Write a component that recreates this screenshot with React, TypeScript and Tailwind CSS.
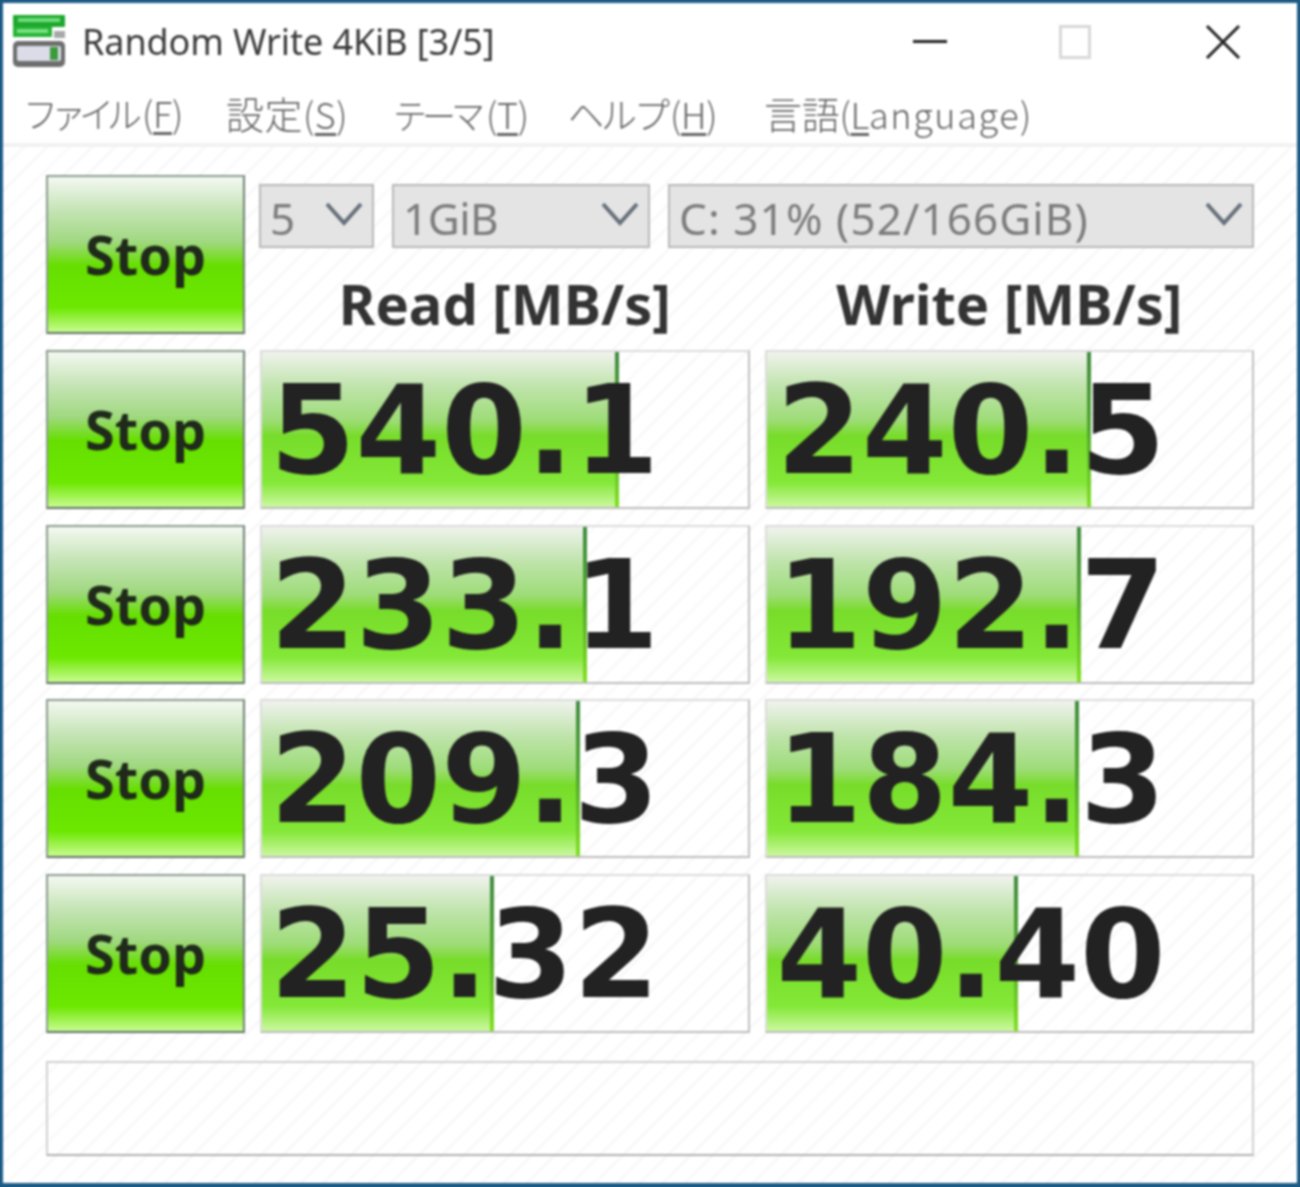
import React from "react";

const rows = [
  { read: "540.1", readPct: 73.5, write: "240.5", writePct: 66.8 },
  { read: "233.1", readPct: 67, write: "192.7", writePct: 64.8 },
  { read: "209.3", readPct: 65.5, write: "184.3", writePct: 64.4 },
  { read: "25.32", readPct: 47.8, write: "40.40", writePct: 51.8 },
];

const menus = [
  { label: "ファイル", labelCls: "text-[35px] tracking-[-7px] mr-[7px]", key: "F", after: ")", cls: "w-[203px]", afterCls: "" },
  { label: "設定", labelCls: "text-[38px]", key: "S", after: ")", cls: "w-[167px] tracking-[0.5px]", afterCls: "" },
  { label: "テーマ", labelCls: "text-[34px] tracking-[-5px] mr-[6px]", key: "T", after: ")", cls: "w-[175px]", afterCls: "" },
  { label: "ヘルプ", labelCls: "text-[36px] tracking-[-3px] mr-[3px]", key: "H", after: ")", cls: "w-[196px]", afterCls: "" },
  { label: "言語", labelCls: "text-[38px]", key: "L", after: "anguage)", cls: "", afterCls: "tracking-[1.6px]" },
];

function StopButton() {
  return (
    <button className="w-[199px] h-[159px] shrink-0 flex items-center justify-center border-2 border-[#8a9c8e] border-r-[#6f8274] border-b-[#5f7264] bg-[linear-gradient(to_bottom,#f4f8f2_0%,#c4e4b4_22%,#a0d880_42%,#66df00_57%,#6ce800_84%,#c8fb90_100%)] font-['Noto_Sans'] font-bold text-[54px] text-[#1f2a1a]">
      Stop
    </button>
  );
}

function Meter({ value, pct, textCls }: { value: string; pct: number; textCls: string }) {
  return (
    <div className="relative h-[159px] flex-1 border-2 border-[#dcdcdc] border-b-[#bcbcbc] border-r-[#c0c0c0] overflow-hidden">
      <div
        className="absolute left-0 top-0 bottom-0 bg-[linear-gradient(to_bottom,#f0f3ee_0%,#c0e4ac_22%,#9edc78_44%,#78dc2a_54%,#84e838_84%,#ccf8a0_100%)]"
        style={{ width: `${pct}%` }}
      >
        <div className="absolute right-0 top-0 bottom-0 w-[4px] bg-[linear-gradient(to_bottom,#3f8a3f_0%,#52a830_50%,#80e020_100%)]" />
      </div>
      <span className={`absolute top-[11px] font-['DejaVu_Sans'] font-bold text-[123px] leading-[136px] text-[#222222] ${textCls}`}>
        {value}
      </span>
    </div>
  );
}

function Select({ text, cls, textCls }: { text: string; cls: string; textCls: string }) {
  return (
    <div className={`h-[64px] flex items-center justify-between pl-[9px] pr-[8px] border-2 border-[#b8b8b8] bg-[#e4e4e4] text-[44px] text-[#7c7c7c] font-['Noto_Sans'] ${cls}`}>
      <span className={`pt-[4px] ${textCls}`}>{text}</span>
      <svg className="mb-[4px]" width="40" height="28" viewBox="0 0 40 28" fill="none" stroke="#66707a" strokeWidth="4">
        <path d="M3 4 L20 23 L37 4" />
      </svg>
    </div>
  );
}

function AppIcon() {
  return (
    <svg width="54" height="54" viewBox="0 0 54 54">
      <rect x="1" y="0" width="52" height="12" rx="1" fill="#1fa82f" />
      <rect x="6" y="3" width="42" height="4" fill="#6fdc7a" />
      <rect x="1" y="12" width="39" height="10" fill="#27b437" />
      <rect x="5" y="14" width="31" height="4" fill="#78e080" />
      <rect x="42" y="16" width="11" height="7" fill="#a8a8a8" />
      <rect x="1" y="26" width="52" height="26" rx="5" fill="#6e6e6e" />
      <rect x="5" y="31" width="44" height="15" rx="2" fill="#dcdce8" />
      <rect x="38" y="32" width="8" height="13" fill="#3c9a3c" />
    </svg>
  );
}

export default function App() {
  return (
    <div className="w-[1300px] h-[1187px] bg-[#1b5a85] pt-[3px] pl-[3px] pr-[3px] pb-[4px] font-['Noto_Sans']">
      <div className="h-full flex flex-col bg-white blur-[0.9px]">
        {/* title bar */}
        <div className="h-[81px] flex items-center pl-[9px] pb-[4px] shrink-0">
          <AppIcon />
          <span className="ml-[16px] text-[36px] tracking-[-0.1px] text-[#3a3a3a]">Random Write 4KiB [3/5]</span>
          <div className="ml-auto flex items-center">
            <div className="w-[34px] h-[3px] bg-[#222]" />
            <div className="ml-[112px] w-[32px] h-[34px] border-[3px] border-[#d8d8d8]" />
            <svg className="ml-[114px] mr-[56px]" width="36" height="36" viewBox="0 0 36 36" stroke="#222" strokeWidth="3">
              <path d="M2 2 L34 34 M34 2 L2 34" />
            </svg>
          </div>
        </div>

        {/* menu */}
        <div className="h-[63px] flex items-center pl-[20px] pb-[2px] shrink-0 text-[36px] tracking-[-0.3px] text-[#666666] font-['Noto_Sans_CJK_JP','Noto_Sans',sans-serif] font-light border-b-4 border-[#f2f2f2]">
          {menus.map((m) => (
            <span key={m.key} className={`${m.cls} whitespace-nowrap`}>
              <span className={m.labelCls}>{m.label}</span>(
              <span className="underline underline-offset-4">{m.key}</span>
              <span className={m.afterCls}>{m.after}</span>
            </span>
          ))}
        </div>

        {/* body */}
        <div className="flex-1 flex flex-col pl-[43px] pr-[43px] pt-[28px] bg-[repeating-linear-gradient(135deg,#ffffff_0px,#ffffff_14px,#f7f7f7_14px,#f7f7f7_16px)]">
          <div className="flex gap-[15px] h-[159px]">
            <StopButton />
            <div className="flex-1 flex flex-col pt-[9px]">
              <div className="flex gap-[18px] -ml-[1px]">
                <Select text="5" cls="w-[115px]" textCls="" />
                <Select text="1GiB" cls="w-[258px]" textCls="tracking-[-0.5px]" />
                <Select text="C: 31% (52/166GiB)" cls="flex-1" textCls="tracking-[1.1px]" />
              </div>
              <div className="flex gap-[15px] mt-[20px] text-[56px] font-bold text-[#333333] leading-[70px] text-center whitespace-nowrap">
                <div className="flex-1">Read [MB/s]</div>
                <div className="flex-1">Write [MB/s]</div>
              </div>
            </div>
          </div>

          <div className="flex flex-col gap-[15.7px] mt-[16px]">
            {rows.map((r) => (
              <div key={r.read} className="flex gap-[15px]">
                <StopButton />
                <Meter value={r.read} pct={r.readPct} textCls="left-[8px]" />
                <Meter value={r.write} pct={r.writePct} textCls="left-[10px]" />
              </div>
            ))}
          </div>

          <div className="h-[95px] mt-[28px] border-2 border-[#d0d0d0] border-b-[#b0b0b0]" />
        </div>
      </div>
    </div>
  );
}
